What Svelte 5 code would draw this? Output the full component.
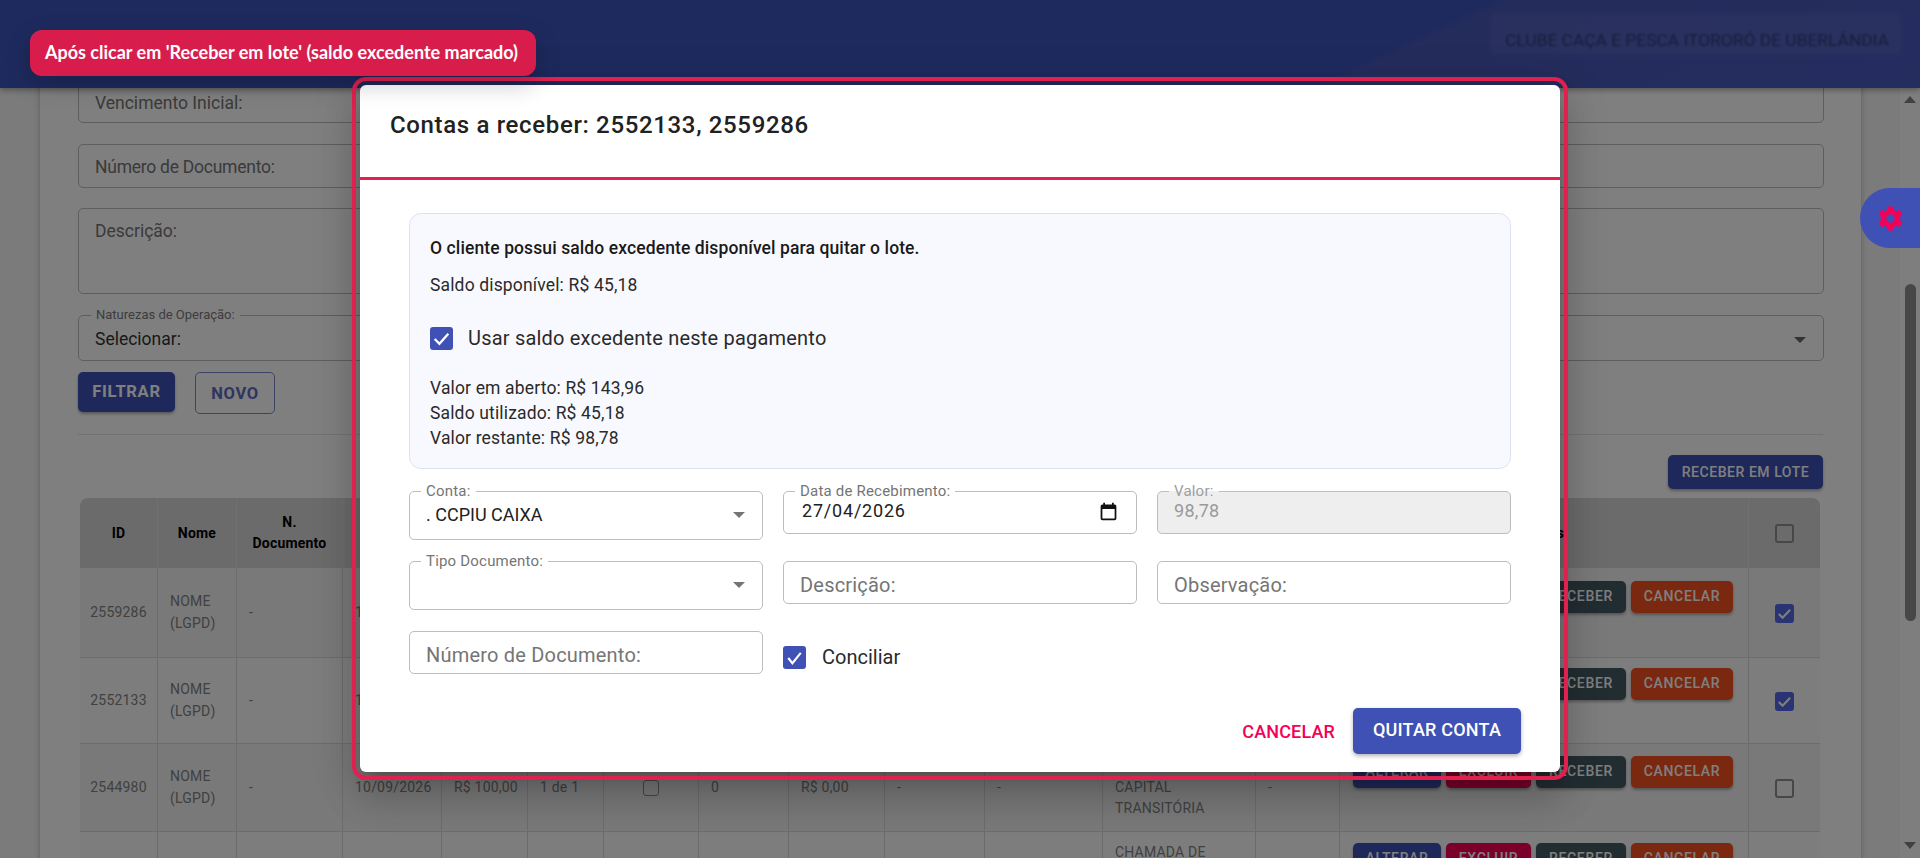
<script>
  const rows = [
    { id: '2559286', cls: 'r0', checked: true, date: '10/09/2026', desc: [] },
    { id: '2552133', cls: 'r1', checked: true, date: '10/09/2026', desc: [] },
    { id: '2544980', cls: 'r2', checked: false, date: '10/09/2026', val: 'R$ 100,00', parc: '1 de 1', box: true, n: '0', sal: 'R$ 0,00', d1: '-', d2: '-', desc: ['\u00a0', 'CAPITAL', 'TRANSITÓRIA'], obs: '-' },
    { id: '', cls: 'r3', checked: false, desc: ['CHAMADA DE'] }
  ];
  const widths = [78, 79, 106, 99, 86, 76, 95, 90, 96, 100, 118, 153, 84, 409, 71];
  const gear = 'M12,15.5A3.5,3.5 0 0,1 8.5,12A3.5,3.5 0 0,1 12,8.5A3.5,3.5 0 0,1 15.5,12A3.5,3.5 0 0,1 12,15.5M19.43,12.97C19.47,12.65 19.5,12.33 19.5,12C19.5,11.67 19.47,11.34 19.43,11L21.54,9.37C21.73,9.22 21.78,8.95 21.66,8.73L19.66,5.27C19.54,5.05 19.27,4.96 19.05,5.05L16.56,6.05C16.04,5.66 15.5,5.32 14.87,5.07L14.5,2.42C14.46,2.18 14.25,2 14,2H10C9.75,2 9.54,2.18 9.5,2.42L9.13,5.07C8.5,5.32 7.96,5.66 7.44,6.05L4.95,5.05C4.73,4.96 4.46,5.05 4.34,5.27L2.34,8.73C2.21,8.95 2.27,9.22 2.46,9.37L4.57,11C4.53,11.34 4.5,11.67 4.5,12C4.5,12.33 4.53,12.65 4.57,12.97L2.46,14.63C2.27,14.78 2.21,15.05 2.34,15.27L4.34,18.73C4.46,18.95 4.73,19.03 4.95,18.95L7.44,17.94C7.96,18.34 8.5,18.68 9.13,18.93L9.5,21.58C9.54,21.82 9.75,22 10,22H14C14.25,22 14.46,21.82 14.5,21.58L14.87,18.93C15.5,18.67 16.04,18.34 16.56,17.94L19.05,18.95C19.27,19.03 19.54,18.95 19.66,18.73L21.66,15.27C21.78,15.05 21.73,14.78 21.54,14.63L19.43,12.97Z';
</script>

<div class="page">
  <header class="appbar">
    <div class="brand">
      <span class="burger"></span>
      <span class="logo">Quality Systems</span>
    </div>
    <div class="org"><span>CLUBE CAÇA E PESCA ITORORÓ DE UBERLÂNDIA</span></div>
  </header>

  <div class="shell">
    <main class="card">
      <div class="bgfield h43"><span>Vencimento Inicial:</span></div>
      <div class="bgfield h44"><span>Número de Documento:</span></div>
      <div class="bgfield h86"><span>Descrição:</span></div>
      <div class="bgfield sel">
        <em>Naturezas de Operação:</em>
        <span class="val">Selecionar:</span>
        <i class="tri dark"></i>
      </div>
      <div class="bgbtns">
        <button class="filtrar">FILTRAR</button>
        <button class="novo">NOVO</button>
      </div>
      <div class="rule"></div>
      <div class="lote"><button class="btnlote">RECEBER EM LOTE</button></div>

      <table>
        <colgroup>
          {#each widths as w}<col style="width:{w}px" />{/each}
        </colgroup>
        <thead>
          <tr>
            <th>ID</th><th>Nome</th><th>N.<br />Documento</th>
            <th></th><th></th><th></th><th></th><th></th><th></th><th></th><th></th><th></th><th></th>
            <th>Ações</th>
            <th><span class="tb"></span></th>
          </tr>
        </thead>
        <tbody>
          {#each rows as r}
            <tr class={r.cls}>
              <td class="c">{r.id}</td>
              <td>{#if r.id}NOME<br />(LGPD){/if}</td>
              <td>{#if r.id}-{/if}</td>
              <td>{r.date ?? ''}</td>
              <td>{r.val ?? ''}</td>
              <td>{r.parc ?? ''}</td>
              <td class="c">{#if r.box}<span class="tb small"></span>{/if}</td>
              <td>{r.n ?? ''}</td>
              <td>{r.sal ?? ''}</td>
              <td>{r.d1 ?? ''}</td>
              <td>{r.d2 ?? ''}</td>
              <td class="desc">{#each r.desc as l, i}{#if i}<br />{/if}{l}{/each}</td>
              <td>{r.obs ?? ''}</td>
              <td class="acts">
                <div class="actrow">
                  <button class="alt">ALTERAR</button>
                  <button class="exc">EXCLUIR</button>
                  <button class="rec">RECEBER</button>
                  <button class="can">CANCELAR</button>
                </div>
              </td>
              <td class="c">
                {#if r.cls !== 'r3'}
                  <span class="tb" class:on={r.checked}>
                    {#if r.checked}
                      <svg viewBox="0 0 20 20"><path d="M4 10.5l4 4 8-8.5" fill="none" stroke="#fff" stroke-width="2.2" /></svg>
                    {/if}
                  </span>
                {/if}
              </td>
            </tr>
          {/each}
        </tbody>
      </table>
    </main>

    <aside class="scrollbar">
      <i class="up"></i>
      <i class="thumb"></i>
      <i class="down"></i>
    </aside>
  </div>
</div>

<div class="scrim"></div>

<button class="settings" aria-label="Configurações">
  <svg viewBox="0 0 24 24" width="29" height="29"><path d={gear} fill="#f50057" /></svg>
</button>

<div class="overlay">
  <section class="modal">
    <h2>Contas a receber: 2552133, 2559286</h2>
    <div class="body">
      <div class="info">
        <p class="strong">O cliente possui saldo excedente disponível para quitar o lote.</p>
        <p class="saldo">Saldo disponível: R$ 45,18</p>
        <label class="chk big">
          <span class="box">
            <svg viewBox="0 0 22 22"><path d="M4.5 11.5l4.5 4.5 8.5-9.5" fill="none" stroke="#fff" stroke-width="2.2" /></svg>
          </span>
          <span>Usar saldo excedente neste pagamento</span>
        </label>
        <div class="calc">
          <div>Valor em aberto: R$ 143,96</div>
          <div>Saldo utilizado: R$ 45,18</div>
          <div>Valor restante: R$ 98,78</div>
        </div>
      </div>

      <div class="form">
        <div class="f tall">
          <em>Conta:</em><span class="v">. CCPIU CAIXA</span><i class="tri"></i>
        </div>
        <div class="f">
          <em>Data de Recebimento:</em><span class="v date wide">27/04/2026</span>
          <svg class="cal" viewBox="0 0 24 24" width="21" height="21"><path d="M19 4h-1V2h-2v2H8V2H6v2H5a2 2 0 0 0-2 2v14a2 2 0 0 0 2 2h14a2 2 0 0 0 2-2V6a2 2 0 0 0-2-2zm0 16H5V9h14v11z" fill="#111" /></svg>
        </div>
        <div class="f off">
          <em>Valor:</em><span class="v date">98,78</span>
        </div>
        <div class="f tall">
          <em>Tipo Documento:</em><i class="tri"></i>
        </div>
        <div class="f"><span class="ph">Descrição:</span></div>
        <div class="f"><span class="ph">Observação:</span></div>
        <div class="f"><span class="ph">Número de Documento:</span></div>
        <label class="chk conc">
          <span class="box">
            <svg viewBox="0 0 22 22"><path d="M5 11.5l4 5 8-10" fill="none" stroke="#fff" stroke-width="2" /></svg>
          </span>
          <span>Conciliar</span>
        </label>
      </div>
    </div>
    <footer>
      <button class="cancel">CANCELAR</button>
      <button class="quit">QUITAR CONTA</button>
    </footer>
  </section>
</div>

<div class="badge">Após clicar em 'Receber em lote' (saldo excedente marcado)</div>

<style>
  :global(body) {
    margin: 0;
    overflow: hidden;
    font-family: Roboto, "Liberation Sans", sans-serif;
  }
  button { font-family: inherit; border: 0; cursor: pointer; }
  em { font-style: normal; }
  i { display: block; }

  .page {
    width: 1920px;
    height: 858px;
    overflow: hidden;
    background: #f6f6f6;
    position: relative;
  }
  .appbar {
    position: absolute;
    inset: 0 0 auto 0;
    height: 88px;
    z-index: 2;
    display: flex;
    justify-content: space-between;
    align-items: flex-start;
    background: linear-gradient(155deg, #3d54bc 0, #3d54bc 71%, #4858b8 71.6%, #4a5ac0 100%);
    box-shadow: 0 2px 6px rgba(0, 0, 0, .35);
  }
  .brand { display: flex; align-items: center; gap: 30px; padding: 28px 0 0 40px; }
  .burger { width: 18px; height: 14px; border-top: 2px solid #5b6fc8; border-bottom: 2px solid #5b6fc8; }
  .logo { font-size: 29px; color: #4b5fc4; }
  .org {
    margin: 15px 20px 0 0;
    padding: 14px 11px 2px 13px;
    background: rgba(255, 255, 255, .06);
    box-shadow: 0 0 8px 2px rgba(255, 255, 255, .05);
    filter: blur(1.1px);
    font-size: 17.4px;
    color: #2e3b78;
    line-height: 22px;
  }

  .shell { display: flex; width: 1920px; }
  .card {
    width: 1821px;
    margin-left: 40px;
    padding: 80px 38px 0;
    box-sizing: border-box;
    background: #fff;
    box-shadow: 0 0 6px rgba(0, 0, 0, .25);
    flex: none;
  }
  .scrollbar {
    margin-left: 39px;
    width: 20px;
    height: 858px;
    flex: none;
    background: #fdfdfd;
    position: relative;
  }
  .up, .down {
    position: absolute;
    left: 4px;
    width: 0;
    height: 0;
    border-left: 6px solid transparent;
    border-right: 6px solid transparent;
  }
  .up { top: 96px; border-bottom: 7px solid #808080; }
  .down { top: 842px; border-top: 7px solid #808080; }
  .thumb {
    position: absolute;
    left: 5px;
    top: 284px;
    width: 11px;
    height: 337px;
    border-radius: 6px;
    background: #8e8e8e;
  }

  .bgfield {
    box-sizing: border-box;
    border: 1px solid #bdbdbd;
    border-radius: 5px;
    padding: 0 16px;
    width: 1746px;
    margin-bottom: 21px;
    color: #757575;
    font-size: 17.5px;
    position: relative;
  }
  .h43 { height: 43px; line-height: 44px; }
  .h44 { height: 44px; line-height: 44px; margin-bottom: 20px; letter-spacing: -.25px; }
  .h86 { height: 86px; line-height: 44px; }
  .sel { height: 46px; margin-bottom: 11px; }
  .sel em {
    position: absolute;
    top: -9px;
    left: 12px;
    padding: 0 5px 0 5px;
    font-size: 13px;
    line-height: 16px;
    background: #fff;
    color: #7a7a7a;
  }
  .sel .val { display: block; margin-top: 13px; line-height: 20px; color: #333; }
  .tri {
    position: absolute;
    width: 0;
    height: 0;
    border-left: 6.5px solid transparent;
    border-right: 6.5px solid transparent;
    border-top: 6.5px solid #757575;
    right: 17px;
    top: 20px;
  }
  .tri.dark { border-top-color: #666; top: 21px; right: 17px; }

  .bgbtns { display: flex; gap: 20px; align-items: flex-start; }
  .bgbtns button { border-radius: 5px; font-size: 16.5px; font-weight: 700; letter-spacing: .7px; padding: 0; }
  .filtrar { width: 97px; height: 40px; background: #3f51b5; color: #fff; box-shadow: 0 2px 3px rgba(0,0,0,.3); padding-bottom: 2px !important; }
  .novo { width: 80px; height: 42px; background: transparent; border: 1px solid #7986cb !important; color: #5c6bc0; }
  .rule { height: 1px; background: #e4e4e4; margin-top: 20px; }
  .lote { display: flex; justify-content: flex-end; margin-top: 20px; height: 34px; }
  .btnlote {
    width: 155px;
    height: 34px;
    border-radius: 5px;
    background: #3f51b5;
    color: #fff;
    font-size: 14px;
    font-weight: 500;
    letter-spacing: .55px;
    padding: 0;
    box-shadow: 0 2px 3px rgba(0,0,0,.3);
  }

  table {
    margin: 9px 0 0 2px;
    width: 1740px;
    table-layout: fixed;
    border-collapse: separate;
    border-spacing: 0;
    font-size: 14px;
    letter-spacing: .2px;
    color: #828282;
  }
  th {
    height: 70px;
    padding: 0;
    background: #d6d6d6;
    font-size: 14px;
    font-weight: 700;
    color: #000;
    line-height: 21px;
    text-align: center;
    border-right: 1px solid #e2e2e2;
    box-sizing: border-box;
  }
  th:first-child { border-top-left-radius: 8px; }
  th:last-child { border-top-right-radius: 8px; border-right: 0; }
  td {
    padding: 0 12px;
    line-height: 21.5px;
    border-right: 1px solid #d8d8d8;
    border-bottom: 1px solid #d8d8d8;
    box-sizing: border-box;
    overflow: hidden;
    white-space: nowrap;
  }
  td:last-child { border-right: 0; }
  td.c { text-align: center; padding: 0; }
  .r0 td { height: 90px; background: #f2f2f2; }
  .r1 td { height: 86px; background: #fbfbfb; }
  .r2 td { height: 88px; background: #f2f2f2; }
  .r3 td { height: 88px; background: #fbfbfb; }
  .r3 td.desc { vertical-align: top; padding-top: 10px; }
  td.acts { vertical-align: top; padding: 0 0 0 13px; }
  .r0 .acts { padding-top: 13px; }
  .r1 .acts { padding-top: 10px; }
  .r2 .acts { padding-top: 12px; }
  .r3 .acts { padding-top: 11px; }
  .actrow { display: flex; gap: 5px; }
  .actrow button {
    height: 32px;
    border-radius: 5px;
    color: #fff;
    font-size: 14px;
    font-weight: 500;
    letter-spacing: .65px;
    padding: 0 0 3px;
    box-shadow: 0 2px 3px rgba(0,0,0,.3);
  }
  .alt { width: 88px; background: #3f51b5; }
  .exc { width: 85px; background: #f50057; }
  .rec { width: 90px; background: #455a64; }
  .can { width: 102px; background: #f4511e; }

  .tb {
    display: inline-block;
    box-sizing: border-box;
    width: 19px;
    height: 19px;
    vertical-align: middle;
    border: 2px solid #8f8f8f;
    border-radius: 3px;
  }
  .tb.small { width: 16px; height: 16px; border-width: 1.5px; }
  .tb.on { background: #5566e6; border-color: #5566e6; position: relative; }
  .tb.on svg { position: absolute; inset: -2px; width: 19px; height: 19px; }

  .scrim {
    position: absolute;
    inset: 0;
    width: 1920px;
    height: 858px;
    background: rgba(0, 0, 0, .5);
    z-index: 3;
  }
  .settings {
    position: absolute;
    z-index: 4;
    top: 188px;
    left: 1860px;
    width: 60px;
    height: 60px;
    border-radius: 30px 0 0 30px;
    background: #3f51b5;
    display: flex;
    align-items: center;
    justify-content: flex-start;
    padding: 0 0 0 16px;
  }

  .overlay {
    position: absolute;
    inset: 0;
    width: 1920px;
    height: 858px;
    box-sizing: border-box;
    padding-top: 85px;
    z-index: 5;
    display: flex;
    align-items: flex-start;
    justify-content: center;
  }
  .modal {
    width: 1200px;
    background: #fff;
    border-radius: 6px;
    outline: 4px solid #e0204f;
    outline-offset: 4px;
    box-shadow: 0 11px 15px -7px rgba(0,0,0,.2), 0 24px 38px 3px rgba(0,0,0,.14), 0 9px 46px 8px rgba(0,0,0,.12);
  }
  h2 {
    margin: 0;
    height: 92px;
    box-sizing: border-box;
    padding: 24px 30px 0;
    font-size: 24px;
    line-height: 32px;
    font-weight: 500;
    letter-spacing: .65px;
    color: #212121;
  }
  .body {
    border-top: 3px solid #e91e4f;
    padding: 33px 49px 0;
  }
  .info {
    box-sizing: border-box;
    height: 256px;
    background: #f8f9ff;
    border: 1px solid #dfe2f2;
    border-radius: 12px;
    padding: 22px 20px 0;
    color: #2a2a2a;
    font-size: 17.5px;
    letter-spacing: .15px;
  }
  .info p { margin: 0; line-height: 24px; }
  .strong { font-weight: 500; color: #1a1a1a; letter-spacing: .1px; }
  .saldo { margin-top: 13px !important; }
  .chk { display: flex; align-items: center; color: #2a2a2a; }
  .box {
    display: block;
    width: 23px;
    height: 23px;
    border-radius: 3px;
    background: #3f51b5;
    flex: none;
  }
  .box svg { display: block; width: 100%; height: 100%; }
  .big { margin-top: 29px; font-size: 20px; gap: 15px; line-height: 24px; letter-spacing: .2px; }
  .calc { margin-top: 26px; line-height: 25px; }

  .form {
    margin-top: 22px;
    display: grid;
    grid-template-columns: repeat(3, 354px);
    column-gap: 20px;
    grid-auto-rows: 70px;
    align-items: start;
  }
  .f {
    position: relative;
    box-sizing: border-box;
    height: 43px;
    border: 1px solid #bdbdbd;
    border-radius: 5px;
    padding: 0 16px;
    color: #212121;
    font-size: 18px;
  }
  .f.tall { height: 49px; }
  .f em {
    position: absolute;
    top: -10px;
    left: 11px;
    padding: 0 5px;
    background: #fff;
    color: #757575;
    font-size: 15px;
    letter-spacing: .2px;
    line-height: 18px;
  }
  .f .v { display: block; line-height: 24px; margin-top: 11px; }
  .f .date { margin-top: 7px; line-height: 24px; letter-spacing: .3px; }
  .f .wide { letter-spacing: .8px; padding-left: 2px; }
  .ph { display: block; font-size: 20px; line-height: 24px; margin-top: 11px; color: #757575; letter-spacing: .2px; }
  .cal { position: absolute; right: 17px; top: 9px; }
  .off { background: #eeeeee; color: #9a9a9a; }
  .off em { background: linear-gradient(to bottom, #fff 50%, #eee 50%); color: #9e9e9e; }
  .conc { margin: 14px 0 0 0; font-size: 20px; gap: 16px; }

  footer {
    display: flex;
    justify-content: flex-end;
    align-items: center;
    gap: 18px;
    padding: 7px 39px 18px 0;
  }
  .cancel {
    background: none;
    color: #f50057;
    font-size: 18px;
    font-weight: 500;
    padding: 0;
    letter-spacing: .15px;
  }
  .quit {
    width: 168px;
    height: 46px;
    border-radius: 5px;
    background: #3f51b5;
    color: #fff;
    font-size: 18px;
    font-weight: 500;
    letter-spacing: .2px;
    padding: 0 0 4px;
    box-shadow: 0 2px 4px rgba(0,0,0,.3);
  }

  .badge {
    position: absolute;
    z-index: 6;
    left: 30px;
    top: 30px;
    height: 46px;
    width: 506px;
    box-sizing: border-box;
    padding-left: 15px;
    border-radius: 12px;
    background: rgba(220, 30, 76, .98);
    color: #fff;
    font-family: Lato, "Open Sans", sans-serif;
    font-weight: 700;
    font-size: 18px;
    line-height: 44px;
    white-space: nowrap;
    box-shadow: 0 8px 24px rgba(0, 0, 0, .22);
  }
</style>
